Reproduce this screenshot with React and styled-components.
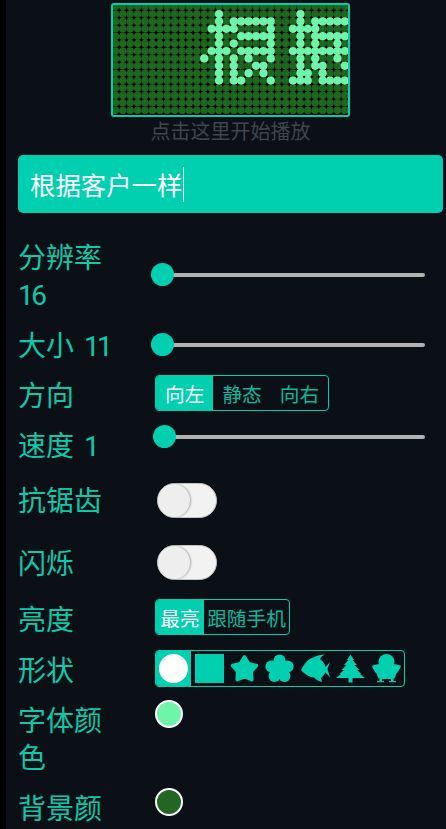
import React from "react";
import styled, { createGlobalStyle } from "styled-components";

const TEAL = "#00cfb0";

const GlobalStyle = createGlobalStyle`
  html, body {
    margin: 0;
    height: 100%;
    overflow: hidden;
    background: #0b0f16;
  }
  body {
    font-family: Roboto, "Noto Sans CJK SC", "Noto Sans", sans-serif;
  }
`;

const Screen = styled.div`
  display: flex;
  height: 829px;
  overflow: hidden;
  background: #0b1017;
`;

const EdgeStrip = styled.div`
  flex: 0 0 6px;
  background: #000;
`;

const Main = styled.main`
  flex: 1;
  min-width: 0;
  padding: 3px 3px 0 12px;
`;

const Preview = styled.div`
  display: flex;
  flex-direction: column;
  align-items: center;
`;

const Board = styled.div`
  width: 235px;
  height: 110px;
  border: 2px solid ${TEAL};
  border-radius: 3px;
  background: #000;
  overflow: hidden;
  svg {
    display: block;
  }
`;

const Hint = styled.div`
  margin-top: 2px;
  font-size: 20px;
  line-height: 26px;
  color: #3d474f;
`;

const TextBox = styled.div`
  display: flex;
  align-items: center;
  height: 58px;
  margin-top: 10px;
  padding-left: 12px;
  border-radius: 5px;
  background: ${TEAL};
  color: #fff;
  font-size: 25.4px;
`;

const Caret = styled.span`
  width: 1px;
  height: 35px;
  margin-left: 1px;
  background: #e8f5f2;
`;

const Row = styled.div`
  display: grid;
  grid-template-columns: 133px 1fr;
  align-items: start;
  margin-top: ${(p) => p.$gap}px;
`;

const Label = styled.div`
  width: 96px;
  margin: 1px 0 -1px;
  font-size: 28px;
  line-height: 37px;
  color: #0cc9aa;
`;

const Num = styled.span`
  margin-left: ${(p) => p.$inset || 0}px;
  letter-spacing: -2.6px;
`;

const Control = styled.div`
  display: flex;
  margin-top: ${(p) => p.$top}px;
  margin-left: ${(p) => p.$left || 0}px;
`;

const SliderControl = styled(Control)`
  margin-right: 18px;
`;

const Slider = styled.input`
  flex: 1;
  min-width: 0;
  height: 23px;
  margin: 0;
  appearance: none;
  background: transparent;
  &::-webkit-slider-runnable-track {
    height: 4px;
    border-radius: 2px;
    background: #b2b2b2;
  }
  &::-webkit-slider-thumb {
    appearance: none;
    width: 23px;
    height: 23px;
    margin-top: -9.5px;
    border-radius: 50%;
    background: ${TEAL};
  }
`;

const Segments = styled.div`
  display: flex;
  box-sizing: border-box;
  height: ${(p) => p.$height}px;
  border: 1px solid ${TEAL};
  border-radius: 4px;
  overflow: hidden;
`;

const Segment = styled.div`
  display: flex;
  align-items: center;
  justify-content: center;
  padding: 0 ${(p) => p.$pad}px;
  font-size: 19.7px;
  color: ${(p) => (p.$active ? "#fff" : "#0fb79c")};
  background: ${(p) => (p.$active ? TEAL : "transparent")};
`;

const ShapeCell = styled.div`
  display: flex;
  align-items: center;
  justify-content: center;
  width: 35.4px;
  color: ${(p) => (p.$active ? "#fff" : TEAL)};
  background: ${(p) => (p.$active ? TEAL : "transparent")};
  svg {
    display: block;
    width: 29px;
    height: 29px;
  }
`;

const Toggle = styled.div`
  box-sizing: border-box;
  width: 60px;
  height: 35px;
  border: 1px solid #c4c4c4;
  border-radius: 18px;
  background: #f2f2f2;
`;

const ToggleKnob = styled.div`
  width: 32px;
  height: 33px;
  border-radius: 50%;
  background: #eeeeee;
  box-shadow: 1px 0 2px rgba(0, 0, 0, 0.3);
`;

const Swatch = styled.div`
  box-sizing: border-box;
  width: 28px;
  height: 28px;
  border: 2px solid #fff;
  border-radius: 50%;
  background: ${(p) => p.$color};
`;

// lit cells of the scrolling text, as [row, first col, last col]
const LIT = [
  [0, 0, 0], [1, 0, 0], [1, 2, 7], [2, -1, 2], [2, 7, 7], [3, 0, 0], [3, 3, 7],
  [4, 0, 0], [4, 2, 2], [4, 7, 7], [5, -1, 1], [5, 3, 7], [6, -2, -2], [6, 0, 0],
  [6, 2, 2], [6, 4, 4], [6, 7, 7], [7, 0, 0], [7, 2, 2], [7, 5, 6], [8, 0, 0],
  [8, 2, 2], [8, 4, 4], [8, 6, 6], [9, 0, 0], [9, 2, 3], [9, 7, 7],
  [0, 11, 11], [1, 11, 11], [1, 13, 17], [2, 10, 13], [3, 11, 11], [3, 13, 17],
  [4, 11, 11], [4, 13, 13], [4, 16, 16], [5, 10, 17], [6, 11, 11], [6, 13, 13],
  [6, 16, 16], [7, 11, 11], [7, 13, 14], [7, 17, 17], [8, 11, 12], [8, 14, 14],
  [9, 10, 12], [9, 14, 17],
];

const PITCH = 7.4;
const cellX = (c) => 106 + PITCH * c;
const cellY = (r) => 9 + PITCH * r;

const LedBoard = () => {
  const dots = [];
  for (let r = -1; r <= 13; r++) {
    for (let c = -15; c <= 17; c++) {
      dots.push(<circle key={`${r}:${c}`} cx={cellX(c)} cy={cellY(r)} r="3.8" fill="#1f661f" />);
    }
  }
  LIT.forEach(([r, from, to]) => {
    for (let c = from; c <= to; c++) {
      dots.push(<circle key={`on${r}:${c}`} cx={cellX(c)} cy={cellY(r)} r="4.1" fill="#6ff5a9" />);
    }
  });
  return (
    <svg width="235" height="110" viewBox="0 0 235 110">
      {dots}
    </svg>
  );
};

const Circle = () => (
  <svg viewBox="0 0 29 29">
    <circle cx="14.5" cy="14.5" r="14.5" fill="currentColor" />
  </svg>
);

const Square = () => (
  <svg viewBox="0 0 29 29">
    <rect width="29" height="29" fill="currentColor" />
  </svg>
);

const Star = () => (
  <svg viewBox="0 0 29 29">
    <polygon
      points="14.5,3 18.6,9.8 26.4,11.6 21.2,17.7 21.8,25.6 14.5,22.5 7.2,25.6 7.8,17.7 2.6,11.6 10.4,9.8"
      fill="currentColor"
      stroke="currentColor"
      strokeWidth="3.6"
      strokeLinejoin="round"
    />
  </svg>
);

const Clover = () => (
  <svg viewBox="0 0 29 29" fill="currentColor">
    <circle cx="14.5" cy="6.5" r="6" />
    <circle cx="22.6" cy="12.4" r="6" />
    <circle cx="19.5" cy="21.9" r="6" />
    <circle cx="9.5" cy="21.9" r="6" />
    <circle cx="6.4" cy="12.4" r="6" />
    <circle cx="14.5" cy="15" r="8" />
  </svg>
);

const Fish = () => (
  <svg viewBox="0 0 29 29">
    <path
      d="M0 16 C3 10 7 5 12 3.5 C16 1.5 20 0.5 24 0.5 C21 2 19.5 3.5 19 5 C22 7 24 10 24.5 13 L29 8 L26.5 15 L29 23.5 L24.5 18.5 C23 21 21.5 23 20 24 L21 28 C17.5 27 15 25.5 13 23.5 C8 23 3.5 20 0 16 Z"
      fill="currentColor"
    />
  </svg>
);

const Tree = () => (
  <svg viewBox="0 0 29 29">
    <polygon
      points="14.5,0.5 18,6 16.5,6 21,11 18.5,11 23.5,16 21,16 25.5,20 24,20 29,24 16.5,24 16.5,28.5 12.5,28.5 12.5,24 0,24 5,20 3.5,20 8,16 5.5,16 10.5,11 8,11 12.5,6 11,6"
      fill="currentColor"
    />
  </svg>
);

const Chick = () => (
  <svg viewBox="0 0 29 29" fill="currentColor">
    <circle cx="14.5" cy="8" r="8" />
    <path d="M0 12 C4 10 7 10 14.5 10 C22 10 25 10 29 12 C27.5 16 26 18 24 20 C24 23 22 25 20 25 L9 25 C7 25 5 23 5 20 C3 18 1.5 16 0 12 Z" />
    <rect x="7.5" y="24" width="2.5" height="3.5" />
    <rect x="19" y="24" width="2.5" height="3.5" />
    <rect x="5" y="27" width="7" height="1.2" />
    <rect x="17" y="27" width="7" height="1.2" />
  </svg>
);

const SHAPES = [Circle, Square, Star, Clover, Fish, Tree, Chick];

const App = () => (
  <Screen>
    <GlobalStyle />
    <EdgeStrip />
    <Main>
      <Preview>
        <Board>
          <LedBoard />
        </Board>
        <Hint>点击这里开始播放</Hint>
      </Preview>
      <TextBox>
        根据客户一样
        <Caret />
      </TextBox>

      <Row $gap={26}>
        <Label>分辨率 <Num>16</Num></Label>
        <SliderControl $top={24}>
          <Slider type="range" min="16" max="64" defaultValue="16" />
        </SliderControl>
      </Row>
      <Row $gap={14}>
        <Label>大小 <Num $inset={3}>11</Num></Label>
        <SliderControl $top={6}>
          <Slider type="range" min="11" max="64" defaultValue="11" />
        </SliderControl>
      </Row>
      <Row $gap={13}>
        <Label>方向</Label>
        <Control $top={-2} $left={4}>
          <Segments $height={36}>
            <Segment $pad={9} $active>向左</Segment>
            <Segment $pad={9}>静态</Segment>
            <Segment $pad={9}>向右</Segment>
          </Segments>
        </Control>
      </Row>
      <Row $gap={13}>
        <Label>速度 <Num $inset={3}>1</Num></Label>
        <SliderControl $top={-2} $left={2}>
          <Slider type="range" min="1" max="100" defaultValue="1" />
        </SliderControl>
      </Row>
      <Row $gap={18}>
        <Label>抗锯齿</Label>
        <Control $top={1} $left={6}>
          <Toggle>
            <ToggleKnob />
          </Toggle>
        </Control>
      </Row>
      <Row $gap={26}>
        <Label>闪烁</Label>
        <Control $top={0} $left={6}>
          <Toggle>
            <ToggleKnob />
          </Toggle>
        </Control>
      </Row>
      <Row $gap={19}>
        <Label>亮度</Label>
        <Control $top={-2} $left={4}>
          <Segments $height={36}>
            <Segment $pad={4.3} $active>最亮</Segment>
            <Segment $pad={3.2}>跟随手机</Segment>
          </Segments>
        </Control>
      </Row>
      <Row $gap={14}>
        <Label>形状</Label>
        <Control $top={-2} $left={4}>
          <Segments $height={37}>
            {SHAPES.map((Shape, i) => (
              <ShapeCell key={i} $active={i === 0}>
                <Shape />
              </ShapeCell>
            ))}
          </Segments>
        </Control>
      </Row>
      <Row $gap={13}>
        <Label>字体颜色</Label>
        <Control $top={-2} $left={4}>
          <Swatch $color="#6ff5a9" />
        </Control>
      </Row>
      <Row $gap={14}>
        <Label>背景颜色</Label>
        <Control $top={-2} $left={4}>
          <Swatch $color="#226622" />
        </Control>
      </Row>
    </Main>
  </Screen>
);

export default App;
